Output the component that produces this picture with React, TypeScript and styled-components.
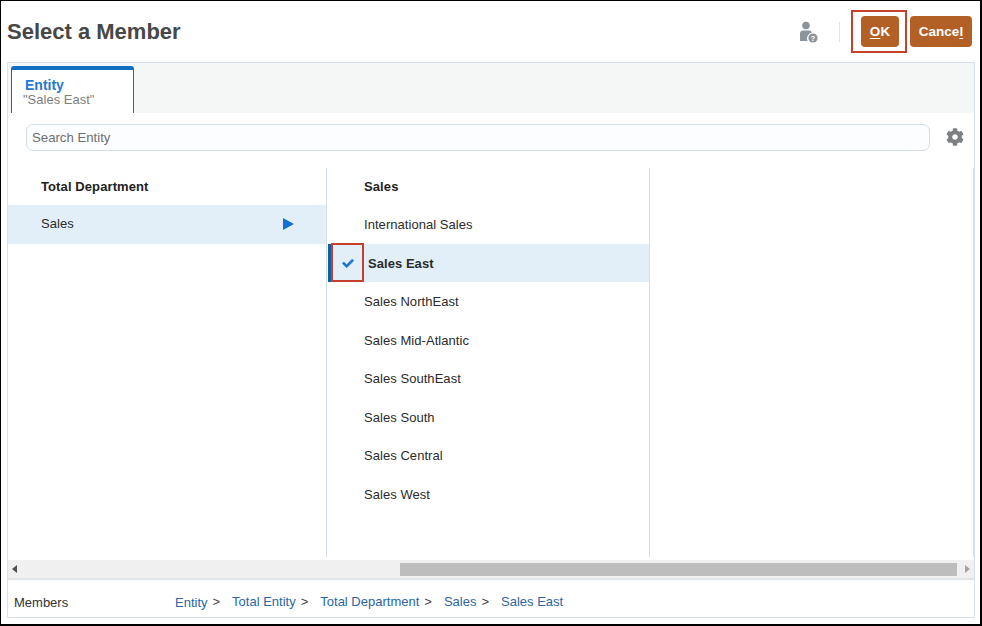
import React from "react";
import styled, { createGlobalStyle } from "styled-components";
import { FaCheck, FaCog } from "react-icons/fa";

const GlobalStyle = createGlobalStyle`
  html, body {
    margin: 0;
    padding: 0;
    background: #fff;
    font-family: "Liberation Sans", Arial, sans-serif;
  }
`;

const Frame = styled.div`
  box-sizing: border-box;
  width: 982px;
  height: 626px;
  border: 1px solid #000;
  border-width: 1px 2px 2px 1px;
  padding: 0 5px 6px 6px;
  display: flex;
  flex-direction: column;
  background: #fff;
`;

const Header = styled.header`
  height: 61px;
  flex: none;
  display: flex;
  align-items: center;
  padding-right: 3px;
`;

const Title = styled.h1`
  margin: 0;
  flex: 1;
  font-size: 22px;
  font-weight: 700;
  color: #474747;
`;

const Divider = styled.span`
  width: 1px;
  height: 20px;
  background: #dfe4e8;
  margin: 0 11px 0 20px;
`;

const Highlight = styled.div`
  box-sizing: border-box;
  width: 56px;
  height: 43px;
  border: 2px solid #c5402d;
  padding-left: 8px;
  display: flex;
  align-items: center;
  margin-top: -1px;
`;

const ActionButton = styled.button<{ $wide?: boolean }>`
  box-sizing: border-box;
  width: ${(p) => (p.$wide ? "62px" : "38px")};
  height: 31px;
  margin-left: ${(p) => (p.$wide ? "3px" : "0")};
  border: none;
  border-radius: 4px;
  background: #b36027;
  color: #fff;
  padding: 0;
  font-family: inherit;
  font-size: 13.5px;
  font-weight: 700;
  u {
    text-underline-offset: 2px;
  }
`;

const Panel = styled.section`
  flex: 1;
  min-height: 0;
  border: 1px solid #d9e2e9;
  display: flex;
  flex-direction: column;
`;

const TabStrip = styled.div`
  height: 50px;
  flex: none;
  background: #f5f6f6;
  padding: 3px 0 0 3px;
  box-sizing: border-box;
  display: flex;
`;

const Tab = styled.div`
  box-sizing: border-box;
  width: 123px;
  height: 47px;
  background: #fff;
  border: 1px solid #0e6fc2;
  border-top: 4px solid #0e6fc2;
  border-bottom: none;
  border-radius: 3px 3px 0 0;
  padding: 8px 0 0 13px;
`;

const TabLabel = styled.div`
  font-size: 14px;
  line-height: 15px;
  font-weight: 700;
  color: #1f7ad0;
`;

const TabValue = styled.div`
  font-size: 13px;
  line-height: 14px;
  margin-left: -2px;
  color: #7e7e7e;
`;

const SearchRow = styled.div`
  flex: none;
  height: 55px;
  box-sizing: border-box;
  padding: 11px 10px 0 18px;
  display: flex;
  align-items: flex-start;
  gap: 16px;
`;

const SearchBox = styled.div`
  flex: 1;
  box-sizing: border-box;
  height: 27px;
  border: 1px solid #d3dde5;
  border-radius: 7px;
  background: #fbfdfe;
  padding-left: 5px;
  font-size: 13.2px;
  line-height: 25px;
  color: #6f6f6f;
`;

const GearIcon = styled(FaCog)`
  width: 18px;
  height: 18px;
  margin-top: 4px;
  color: #7d8083;
`;

const Columns = styled.div`
  flex: none;
  height: 392px;
  display: grid;
  grid-template-columns: 319px 323px 1fr;
`;

const Column = styled.div`
  border-right: 1px solid #d5e0e9;
  margin-bottom: 3px;
`;

const ColumnHead = styled.div<{ $indent: number }>`
  height: 37px;
  padding-left: ${(p) => p.$indent}px;
  font-size: 13px;
  font-weight: 700;
  line-height: 37px;
  letter-spacing: 0.1px;
  color: #222;
`;

const Row = styled.div<{ $selected?: boolean; $active?: boolean }>`
  position: relative;
  box-sizing: border-box;
  height: 38.5px;
  display: flex;
  align-items: center;
  justify-content: space-between;
  padding: 0 32px 1px 33px;
  font-size: 13px;
  letter-spacing: 0.05px;
  color: #2b2b2b;
  background: ${(p) => (p.$selected || p.$active ? "#e2eff9" : "transparent")};
  font-weight: ${(p) => (p.$active ? 700 : 400)};
`;

const MiddleRow = styled(Row)`
  padding: 1px 32px 0 37px;
  margin-left: ${(p) => (p.$active ? "1px" : "0")};
  border-left: ${(p) => (p.$active ? "3px solid #0f5fa6" : "none")};
`;

const Arrow = styled.svg`
  width: 11px;
  height: 12px;
  fill: #1273cf;
`;

const CheckIcon = styled(FaCheck)`
  position: absolute;
  left: 11px;
  top: 14px;
  width: 12px;
  height: 11px;
  color: #1a76cc;
  stroke: currentColor;
  stroke-width: 30px;
`;

const CheckHighlight = styled.span`
  position: absolute;
  left: 0;
  top: -1px;
  box-sizing: border-box;
  width: 33px;
  height: 39px;
  border: 2px solid #c5402d;
`;

const Scrollbar = styled.div`
  flex: none;
  height: 18px;
  background: #f0f0f0;
  display: flex;
  align-items: center;
  padding: 0 4px;
  box-sizing: border-box;
`;

const ScrollTrack = styled.div`
  flex: 1;
  height: 13px;
  margin: 0 8px;
  padding-left: 375px;
  box-sizing: border-box;
  display: flex;
`;

const ScrollThumb = styled.div`
  flex: 1;
  background: #bdbdbd;
`;

const ScrollArrow = styled.svg<{ $muted?: boolean }>`
  width: 5px;
  height: 8px;
  fill: ${(p) => (p.$muted ? "#a3a3a3" : "#505050")};
`;

const Footer = styled.footer`
  flex: 1;
  border-top: 2px solid #dfe4e8;
  display: flex;
  align-items: center;
  padding: 5px 0 0 6px;
  font-size: 13px;
  color: #333;
`;

const FooterLabel = styled.span`
  width: 161px;
  position: relative;
  top: 1px;
`;

const Crumbs = styled.nav`
  display: flex;
  align-items: center;
`;

const Crumb = styled.span<{ $low?: boolean }>`
  color: #2d659f;
  position: relative;
  top: ${(p) => (p.$low ? "1px" : "0")};
`;

const CrumbSep = styled.span`
  color: #444;
  margin: 0 12px 0 5px;
`;

const HelpIcon = () => (
  <svg width="20" height="22" viewBox="0 0 20 22">
    <circle cx="7" cy="4.5" r="3.8" fill="#8d9499" />
    <path d="M1 20V12.5C1 10.5 2.5 9.5 4 9.5h6c1.4 0 2.5.8 3 2-3 .6-5 3.2-5 6 0 1 .2 1.8.6 2.5z" fill="#8d9499" />
    <circle cx="14" cy="17" r="4.6" fill="#8d9499" />
    <text x="14" y="20" fontSize="8" fontWeight="700" fill="#fff" textAnchor="middle" fontFamily="Liberation Sans">?</text>
  </svg>
);

const sales = [
  "International Sales",
  "Sales East",
  "Sales NorthEast",
  "Sales Mid-Atlantic",
  "Sales SouthEast",
  "Sales South",
  "Sales Central",
  "Sales West",
];

const crumbs = ["Entity", "Total Entity", "Total Department", "Sales", "Sales East"];

const App: React.FC = () => (
  <>
    <GlobalStyle />
    <Frame>
      <Header>
        <Title>Select a Member</Title>
        <HelpIcon />
        <Divider />
        <Highlight>
          <ActionButton><u>O</u>K</ActionButton>
        </Highlight>
        <ActionButton $wide>Cance<u>l</u></ActionButton>
      </Header>
      <Panel>
        <TabStrip>
          <Tab>
            <TabLabel>Entity</TabLabel>
            <TabValue>"Sales East"</TabValue>
          </Tab>
        </TabStrip>
        <SearchRow>
          <SearchBox>Search Entity</SearchBox>
          <GearIcon />
        </SearchRow>
        <Columns>
          <Column>
            <ColumnHead $indent={33}>Total Department</ColumnHead>
            <Row $selected>
              Sales
              <Arrow viewBox="0 0 11 12"><path d="M0 0l11 6-11 6z" /></Arrow>
            </Row>
          </Column>
          <Column>
            <ColumnHead $indent={37}>Sales</ColumnHead>
            {sales.map((name) => (
              <MiddleRow key={name} $active={name === "Sales East"}>
                {name}
                {name === "Sales East" && (
                  <>
                    <CheckIcon />
                    <CheckHighlight />
                  </>
                )}
              </MiddleRow>
            ))}
          </Column>
          <Column />
        </Columns>
        <Scrollbar>
          <ScrollArrow viewBox="0 0 5 8"><path d="M5 0v8L0 4z" /></ScrollArrow>
          <ScrollTrack><ScrollThumb /></ScrollTrack>
          <ScrollArrow $muted viewBox="0 0 5 8"><path d="M0 0v8l5-4z" /></ScrollArrow>
        </Scrollbar>
        <Footer>
          <FooterLabel>Members</FooterLabel>
          <Crumbs>
            {crumbs.map((c, i) => (
              <React.Fragment key={c}>
                <Crumb $low={i === 0}>{c}</Crumb>
                {i < crumbs.length - 1 && <CrumbSep>&gt;</CrumbSep>}
              </React.Fragment>
            ))}
          </Crumbs>
        </Footer>
      </Panel>
    </Frame>
  </>
);

export default App;
